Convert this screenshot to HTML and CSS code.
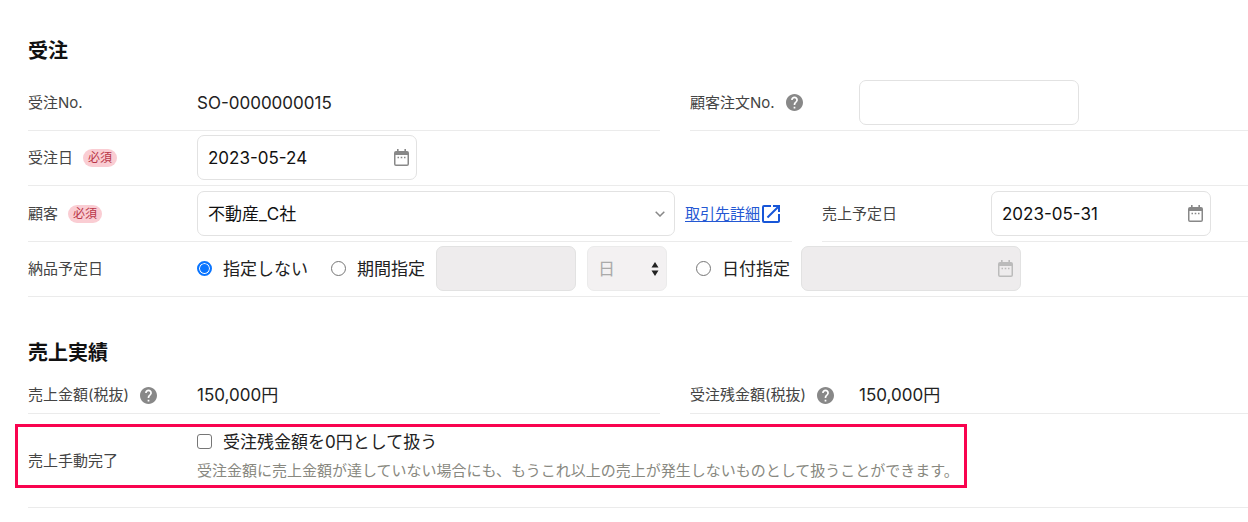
FILE: index.html
```html
<!DOCTYPE html>
<html lang="ja">
<head>
<meta charset="utf-8">
<meta name="viewport" content="width=device-width, initial-scale=1">
<title>受注</title>
<link rel="stylesheet" href="styles.css">
</head>
<body>
<svg class="sprite" aria-hidden="true">
  <symbol id="calendar" viewBox="0 0 15 17"><path fill-rule="evenodd" d="M2 2h1V0h1.600v2h5.800V0H12v2h1a2 2 0 0 1 2 2v11a2 2 0 0 1-2 2H2a2 2 0 0 1-2-2V4a2 2 0 0 1 2-2zM1.500 6v9a.5.5 0 0 0 .5.5h11a.5.5 0 0 0 .5-.5V6zM3.500 7.800H5v1.400H3.500zm3.200 0h1.600v1.400H6.700zm3.300 0h1.500v1.400H10z"/></symbol>
  <symbol id="help" viewBox="2 2 20 20"><path d="M12 2C6.480 2 2 6.480 2 12s4.480 10 10 10 10-4.480 10-10S17.520 2 12 2zm1 17h-2v-2h2v2zm2.070-7.750l-.9.920C13.450 12.900 13 13.500 13 15h-2v-.5c0-1.100.45-2.100 1.170-2.830l1.240-1.260c.37-.36.59-.86.59-1.410 0-1.100-.9-2-2-2s-2 .9-2 2H8c0-2.210 1.790-4 4-4s4 1.790 4 4c0 .88-.36 1.680-.930 2.250z"/></symbol>
  <symbol id="open" viewBox="3 3 18 18"><path d="M19 19H5V5h7V3H5a2 2 0 0 0-2 2v14a2 2 0 0 0 2 2h14c1.100 0 2-.9 2-2v-7h-2v7zM14 3v2h3.590l-9.830 9.830 1.410 1.410L19 6.410V10h2V3h-7z"/></symbol>
</svg>
<main class="page">
  <section class="section">
    <h2 class="title">受注</h2>
    <div class="columns even">
      <div class="row">
        <div class="label">受注No.</div>
        <div class="value">SO-0000000015</div>
      </div>
      <div class="row">
        <div class="label"><label for="customer-order">顧客注文No.</label><svg class="help"><use href="#help"/></svg></div>
        <input class="control date-width" id="customer-order" type="text">
      </div>
    </div>
    <div class="row">
      <div class="label"><label for="order-date">受注日</label><span class="badge">必須</span></div>
      <div class="date">
        <input class="control" id="order-date" type="text" value="2023-05-24">
        <svg class="calendar"><use href="#calendar"/></svg>
      </div>
    </div>
    <div class="columns wide">
      <div class="row">
        <div class="label"><label for="customer">顧客</label><span class="badge">必須</span></div>
        <div class="customer">
          <div class="picker">
            <select class="control" id="customer"><option>不動産_C社</option></select>
            <svg class="chevron" viewBox="0 0 10 6"><path d="M.7.7 5 5 9.300.7"/></svg>
          </div>
          <a class="link" href="#">取引先詳細<svg class="open"><use href="#open"/></svg></a>
        </div>
      </div>
      <div class="row">
        <div class="label"><label for="sales-date">売上予定日</label></div>
        <div class="date">
          <input class="control" id="sales-date" type="text" value="2023-05-31">
          <svg class="calendar"><use href="#calendar"/></svg>
        </div>
      </div>
    </div>
    <div class="row">
      <div class="label" id="delivery">納品予定日</div>
      <div class="delivery" role="radiogroup" aria-labelledby="delivery">
        <label class="choice"><input class="radio" type="radio" name="delivery" checked>指定しない</label>
        <div class="group">
          <label class="choice"><input class="radio" type="radio" name="delivery">期間指定</label>
          <input class="control period" type="text" aria-label="期間" disabled>
          <div class="unit">
            <select class="control" aria-label="単位" disabled><option>日</option></select>
            <svg class="arrows" viewBox="0 0 8 14"><path d="M4 0l3.500 5.500h-7zM4 14L.5 8.500h7z"/></svg>
          </div>
        </div>
        <div class="group last">
          <label class="choice"><input class="radio" type="radio" name="delivery">日付指定</label>
          <div class="date">
            <input class="control" type="text" aria-label="日付" disabled>
            <svg class="calendar"><use href="#calendar"/></svg>
          </div>
        </div>
      </div>
    </div>
  </section>
  <section class="section results">
    <h2 class="title">売上実績</h2>
    <div class="columns even">
      <div class="row compact">
        <div class="label">売上金額(税抜)<svg class="help"><use href="#help"/></svg></div>
        <div class="value">150,000円</div>
      </div>
      <div class="row compact">
        <div class="label">受注残金額(税抜)<svg class="help"><use href="#help"/></svg></div>
        <div class="value">150,000円</div>
      </div>
    </div>
    <div class="row complete">
      <div class="label">売上手動完了</div>
      <div>
        <label class="choice"><input class="check" type="checkbox" aria-describedby="note">受注残金額を0円として扱う</label>
        <p class="note" id="note">受注金額に売上金額が達していない場合にも、もうこれ以上の売上が発生しないものとして扱うことができます。</p>
      </div>
      <div class="highlight"></div>
    </div>
  </section>
</main>
</body>
</html>
```
FILE: styles.css
```css
* { box-sizing: border-box; }

body {
  margin: 0;
  background: #fff;
  color: #222;
  font: 17px/24px Inter, "Noto Sans CJK JP", sans-serif;
}

.sprite { display: none; }

.page { padding: 37px 0 14px 28px; }

.title {
  margin: 0;
  color: #111;
  font-size: 20px;
  line-height: 28px;
  font-weight: 700;
}

.title + * { margin-top: 10px; }

.columns { display: grid; column-gap: 30px; }
.even { grid-template-columns: minmax(0, 632fr) minmax(0, 558fr); }
.wide { grid-template-columns: minmax(0, 764fr) minmax(0, 426fr); }

.row {
  position: relative;
  display: grid;
  grid-template-columns: 169px minmax(0, 1fr);
  align-items: center;
  padding: 4px 0 5px;
  border-bottom: 1px solid #ebebeb;
}

.columns .row { padding-top: 5px; }

.label {
  display: flex;
  align-items: center;
  color: #444;
  font-size: 15px;
  white-space: nowrap;
}

.badge {
  margin-left: 10px;
  padding: 0 5px;
  border-radius: 9px;
  background: #facdd3;
  color: #b93648;
  font-size: 12px;
  line-height: 18px;
}

.help {
  width: 17px;
  height: 17px;
  margin-left: 11px;
  fill: #888;
}

.control {
  display: block;
  width: 100%;
  height: 45px;
  padding: 0 10px;
  border: 1px solid #e2e2e2;
  border-radius: 7px;
  background: #fff;
  color: #111;
  font: inherit;
  appearance: none;
}

.control:disabled { background: #eeeced; color: #aaa; opacity: 1; }

.date, .picker, .unit { position: relative; }
.date, .date-width { width: 220px; }

.calendar {
  position: absolute;
  top: 14px;
  right: 8px;
  width: 15px;
  height: 17px;
  fill: #888;
}

.control:disabled + .calendar { fill: #bbb; }

.customer { display: flex; align-items: center; gap: 10px; }
.picker { flex: 0 1 478px; min-width: 0; }

.chevron {
  position: absolute;
  top: 20px;
  right: 10px;
  width: 10px;
  height: 6px;
  fill: none;
  stroke: #888;
  stroke-width: 1.5;
}

.link {
  display: flex;
  align-items: center;
  color: #2458d3;
  font-size: 15px;
  white-space: nowrap;
  text-underline-offset: 2px;
}

.open { width: 18px; height: 18px; margin-left: 2px; fill: #1756d8; }

.delivery { display: flex; align-items: center; gap: 23px; }
.group { display: flex; align-items: center; gap: 11px; }
.last { margin-left: 6px; }

.choice {
  display: flex;
  align-items: center;
  gap: 11px;
  white-space: nowrap;
}

.radio, .check {
  flex: none;
  width: 15px;
  height: 15px;
  margin: 0;
  border: 1px solid #767676;
  background: #fff;
  appearance: none;
}

.radio { border-radius: 50%; }
.radio:checked { border: 2px solid #0a75ff; background: #0a75ff; box-shadow: inset 0 0 0 1px #fff; }
.check { border-radius: 3px; }

.period { width: 140px; }
.unit { width: 80px; }
.unit .control:disabled { background: #f3f1f2; border-color: #ebebeb; }

.arrows {
  position: absolute;
  top: 16px;
  right: 8px;
  width: 8px;
  height: 14px;
  fill: #222;
}

.results { margin-top: 42px; }
.columns .compact { min-height: 37px; padding: 0; }
.complete { min-height: 94px; padding: 0; }

.note {
  margin: 5px 0 9px;
  color: #888880;
  font-size: 15px;
}

.highlight {
  position: absolute;
  top: 10px;
  left: -13px;
  width: 78%;
  height: 64px;
  border: 3px solid #f9034f;
  pointer-events: none;
}
```
